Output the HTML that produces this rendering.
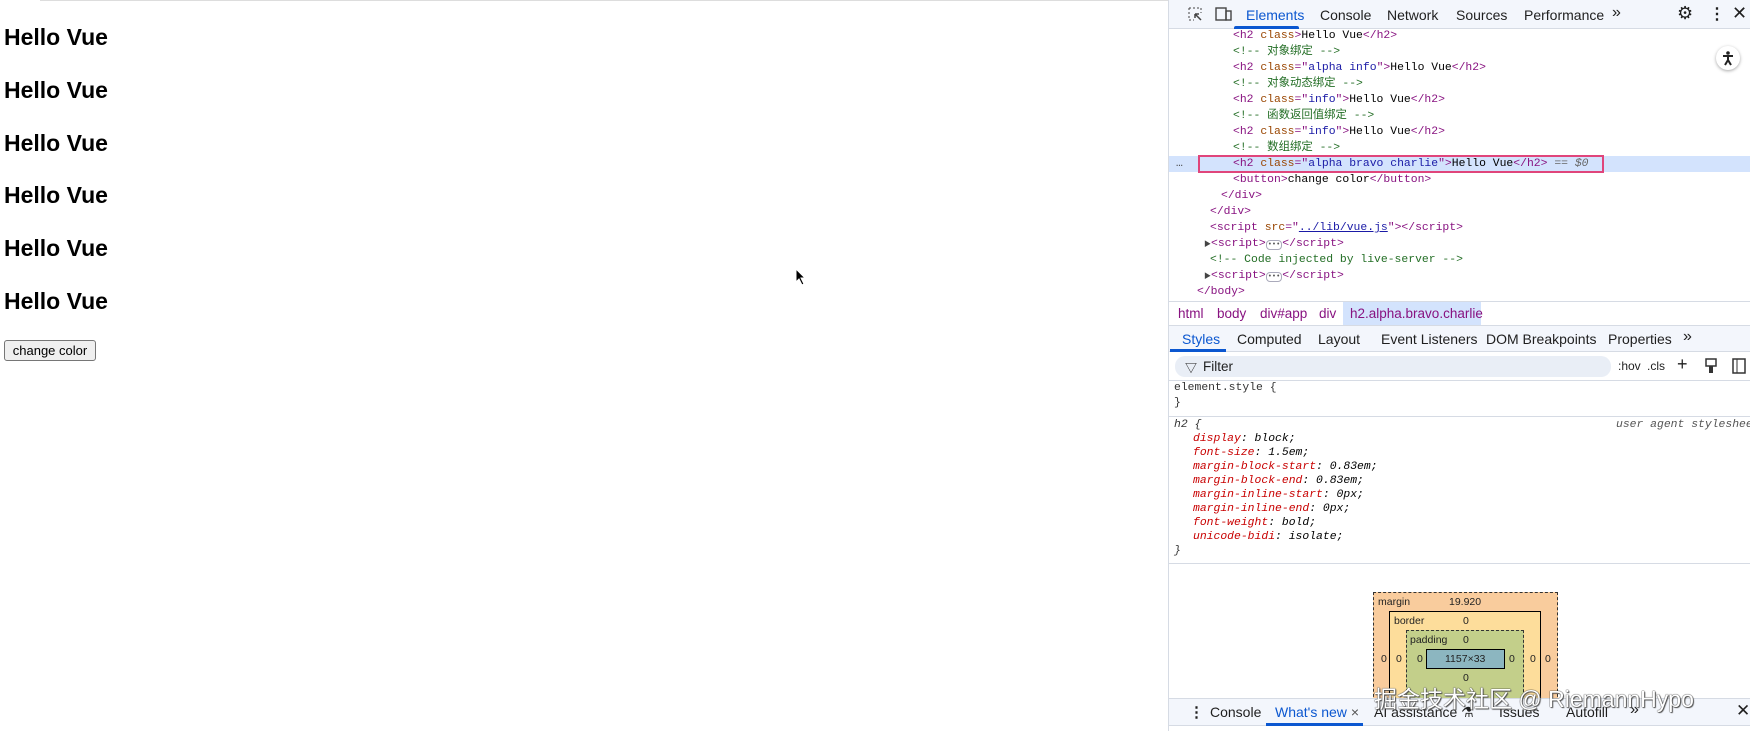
<!DOCTYPE html>
<html><head><meta charset="utf-8">
<style>
*{margin:0;padding:0;box-sizing:border-box}
body{width:1750px;height:731px;overflow:hidden;background:#fff;font-family:"Liberation Sans","Noto Sans CJK SC",sans-serif;position:relative}
.a{position:absolute;white-space:nowrap}
.h{position:absolute;left:4px;font-size:23px;font-weight:bold;color:#000}
.btn{position:absolute;left:4px;top:340px;width:92px;height:21px;border:1px solid #767676;border-radius:3px;background:#efefef;font-size:13px;text-align:center;line-height:19px}
#dt{position:absolute;left:1168px;top:0;width:582px;height:731px;border-left:1px solid #d6dbe4;background:#fff}
.mono{font-family:"Liberation Mono","Noto Sans CJK SC",monospace;font-size:11.4px}
.mono div{line-height:16px;height:16px}
.t{color:#881280}.n{color:#994500}.v{color:#1a1aa6}.c{color:#236e25}
.ui{font-size:13.5px;color:#1f1f1f}
.prop{color:#c80000}
</style></head><body>
<div class="a" style="left:40px;top:0;width:1128px;height:1px;background:#ddd"></div>
<div class="h" style="top:24px">Hello Vue</div>
<div class="h" style="top:77px">Hello Vue</div>
<div class="h" style="top:130px">Hello Vue</div>
<div class="h" style="top:182px">Hello Vue</div>
<div class="h" style="top:235px">Hello Vue</div>
<div class="h" style="top:288px">Hello Vue</div>
<div class="btn">change color</div>
<svg class="a" style="left:795px;top:268px" width="12" height="18" viewBox="0 0 12 18"><path d="M1 1 L1 14 L4 11 L7 17 L9 16 L6 10 L10 10 Z" fill="#000" stroke="#fff" stroke-width="1"/></svg>

<div id="dt">
<div class="a" style="left:0;top:0;width:582px;height:29px;background:#f3f6fc;border-bottom:1px solid #d6dbe4"></div>
<svg class="a" style="left:18px;top:6px" width="16" height="16"><path d="M2 2h12v5M2 2v12h5" stroke="#444" fill="none" stroke-dasharray="2 2"/><path d="M8 8l6 6M8 8h4M8 8v4" stroke="#444" fill="none" stroke-width="1.5"/></svg>
<svg class="a" style="left:46px;top:6px" width="18" height="16"><rect x="1" y="2" width="10" height="12" fill="none" stroke="#444" stroke-width="1.4"/><rect x="11" y="5" width="5" height="9" fill="none" stroke="#444" stroke-width="1.4"/></svg>
<div class="a ui" style="left:77px;top:7px;color:#0b57d0;font-size:14px">Elements</div>
<div class="a" style="left:65px;top:26px;width:65px;height:3px;background:#0b57d0;border-radius:2px 2px 0 0"></div>
<div class="a ui" style="left:151px;top:7px;font-size:14px">Console</div>
<div class="a ui" style="left:218px;top:7px;font-size:14px">Network</div>
<div class="a ui" style="left:287px;top:7px;font-size:14px">Sources</div>
<div class="a ui" style="left:355px;top:7px;font-size:14px">Performance</div>
<div class="a ui" style="left:443px;top:4px;font-size:16px">»</div>
<div class="a ui" style="left:508px;top:3px;font-size:18px">⚙</div>
<div class="a ui" style="left:540px;top:4px;font-size:16px;font-weight:bold">⋮</div>
<div class="a ui" style="left:563px;top:3px;font-size:18px">✕</div>
<div class="a" style="left:547px;top:46px;width:24px;height:24px;border-radius:12px;background:#fff;box-shadow:0 1px 3px rgba(0,0,0,.35)"></div>
<svg class="a" style="left:551px;top:50px" width="16" height="16"><circle cx="8" cy="3" r="1.8" fill="#222"/><path d="M3 6h10M8 6v4M8 10l-3 5M8 10l3 5" stroke="#222" stroke-width="2" fill="none"/></svg>

<div class="a" style="left:0;top:156px;width:582px;height:16px;background:#d3e3fd"></div>
<div class="a" style="left:29px;top:155px;width:406px;height:18px;border:2px solid #e0457b"></div>
<div class="a mono" style="left:7px;top:156px;color:#444;line-height:16px">…</div>
<div class="mono">
<div class="a" style="left:64px;top:28px"><span class="t">&lt;h2 </span><span class="n">class</span><span class="t">&gt;</span>Hello Vue<span class="t">&lt;/h2&gt;</span></div>
<div class="a c" style="left:64px;top:44px">&lt;!-- 对象绑定 --&gt;</div>
<div class="a" style="left:64px;top:60px"><span class="t">&lt;h2 </span><span class="n">class</span><span class="t">="</span><span class="v">alpha info</span><span class="t">"&gt;</span>Hello Vue<span class="t">&lt;/h2&gt;</span></div>
<div class="a c" style="left:64px;top:76px">&lt;!-- 对象动态绑定 --&gt;</div>
<div class="a" style="left:64px;top:92px"><span class="t">&lt;h2 </span><span class="n">class</span><span class="t">="</span><span class="v">info</span><span class="t">"&gt;</span>Hello Vue<span class="t">&lt;/h2&gt;</span></div>
<div class="a c" style="left:64px;top:108px">&lt;!-- 函数返回值绑定 --&gt;</div>
<div class="a" style="left:64px;top:124px"><span class="t">&lt;h2 </span><span class="n">class</span><span class="t">="</span><span class="v">info</span><span class="t">"&gt;</span>Hello Vue<span class="t">&lt;/h2&gt;</span></div>
<div class="a c" style="left:64px;top:140px">&lt;!-- 数组绑定 --&gt;</div>
<div class="a" style="left:64px;top:156px"><span class="t">&lt;h2 </span><span class="n">class</span><span class="t">="</span><span class="v">alpha bravo charlie</span><span class="t">"&gt;</span>Hello Vue<span class="t">&lt;/h2&gt;</span> <span style="color:#666">== <i>$0</i></span></div>
<div class="a" style="left:64px;top:172px"><span class="t">&lt;button&gt;</span>change color<span class="t">&lt;/button&gt;</span></div>
<div class="a t" style="left:52px;top:188px">&lt;/div&gt;</div>
<div class="a t" style="left:41px;top:204px">&lt;/div&gt;</div>
<div class="a" style="left:41px;top:220px"><span class="t">&lt;script </span><span class="n">src</span><span class="t">="</span><span style="color:#1a1aa6;text-decoration:underline">../lib/vue.js</span><span class="t">"&gt;&lt;/script&gt;</span></div>
<div class="a" style="left:35px;top:236px"><span style="color:#444;font-size:7px">▶</span><span class="t">&lt;script&gt;</span><span style="color:#555;border:1px solid #aab;border-radius:4px;font-size:7px;padding:0 1px">•••</span><span class="t">&lt;/script&gt;</span></div>
<div class="a c" style="left:41px;top:252px">&lt;!-- Code injected by live-server --&gt;</div>
<div class="a" style="left:35px;top:268px"><span style="color:#444;font-size:7px">▶</span><span class="t">&lt;script&gt;</span><span style="color:#555;border:1px solid #aab;border-radius:4px;font-size:7px;padding:0 1px">•••</span><span class="t">&lt;/script&gt;</span></div>
<div class="a t" style="left:28px;top:284px">&lt;/body&gt;</div>
</div>

<div class="a" style="left:0;top:301px;width:582px;height:1px;background:#d6dbe4"></div>
<div class="a" style="left:174px;top:302px;width:138px;height:23px;background:#d3e3fd"></div>
<div class="a ui" style="left:9px;top:306px;color:#881280">html</div>
<div class="a ui" style="left:48px;top:306px;color:#881280">body</div>
<div class="a ui" style="left:91px;top:306px;color:#881280">div#app</div>
<div class="a ui" style="left:150px;top:306px;color:#881280">div</div>
<div class="a ui" style="left:181px;top:306px;color:#881280">h2.alpha.bravo.charlie</div>
<div class="a" style="left:0;top:325px;width:582px;height:27px;background:#f3f6fc;border-top:1px solid #d6dbe4;border-bottom:1px solid #d6dbe4"></div>
<div class="a ui" style="left:13px;top:331px;color:#0b57d0;font-size:14px">Styles</div>
<div class="a" style="left:1px;top:349px;width:56px;height:3px;background:#0b57d0"></div>
<div class="a ui" style="left:68px;top:331px;font-size:14px">Computed</div>
<div class="a ui" style="left:149px;top:331px;font-size:14px">Layout</div>
<div class="a ui" style="left:212px;top:331px;font-size:14px">Event Listeners</div>
<div class="a ui" style="left:317px;top:331px;font-size:14px">DOM Breakpoints</div>
<div class="a ui" style="left:439px;top:331px;font-size:14px">Properties</div>
<div class="a ui" style="left:514px;top:328px;font-size:16px">»</div>
<div class="a" style="left:6px;top:356px;width:436px;height:21px;border-radius:10px;background:#e9eef6"></div>
<div class="a ui" style="left:16px;top:359px;font-size:12px">▽</div>
<div class="a ui" style="left:34px;top:359px">Filter</div>
<div class="a ui" style="left:449px;top:359px;font-size:12px">:hov</div>
<div class="a ui" style="left:478px;top:359px;font-size:12px">.cls</div>
<div class="a ui" style="left:508px;top:354px;font-size:18px">+</div>
<svg class="a" style="left:536px;top:358px" width="12" height="16"><rect x="1" y="1" width="10" height="7" fill="none" stroke="#333" stroke-width="1.5"/><rect x="4" y="8" width="4" height="7" fill="#333"/></svg>
<svg class="a" style="left:563px;top:358px" width="14" height="16"><rect x="1" y="1" width="12" height="14" fill="none" stroke="#333" stroke-width="1.5"/><line x1="5" y1="1" x2="5" y2="15" stroke="#333"/></svg>
<div class="a" style="left:0;top:380px;width:582px;height:1px;background:#d6dbe4"></div>
<div class="mono">
<div class="a" style="left:5px;top:380px;color:#333">element.style {</div>
<div class="a" style="left:5px;top:395px;color:#333">}</div>
</div>
<div class="a" style="left:0;top:416px;width:582px;height:1px;background:#d6dbe4"></div>
<div class="mono" style="font-style:italic">
<div class="a" style="left:5px;top:417px;color:#333">h2 {</div>
<div class="a" style="left:447px;top:417px;color:#555">user agent stylesheet</div>
<div class="a" style="left:24px;top:431px"><span class="prop">display</span>: block;</div>
<div class="a" style="left:24px;top:445px"><span class="prop">font-size</span>: 1.5em;</div>
<div class="a" style="left:24px;top:459px"><span class="prop">margin-block-start</span>: 0.83em;</div>
<div class="a" style="left:24px;top:473px"><span class="prop">margin-block-end</span>: 0.83em;</div>
<div class="a" style="left:24px;top:487px"><span class="prop">margin-inline-start</span>: 0px;</div>
<div class="a" style="left:24px;top:501px"><span class="prop">margin-inline-end</span>: 0px;</div>
<div class="a" style="left:24px;top:515px"><span class="prop">font-weight</span>: bold;</div>
<div class="a" style="left:24px;top:529px"><span class="prop">unicode-bidi</span>: isolate;</div>
<div class="a" style="left:5px;top:543px;color:#333">}</div>
</div>
<div class="a" style="left:0;top:563px;width:582px;height:1px;background:#d6dbe4"></div>

<div class="a" style="left:204px;top:592px;width:185px;height:110px;background:#f9cc9d;border:1px dashed #333"></div>
<div class="a" style="left:220px;top:611px;width:152px;height:91px;background:#fddd9b;border:1px solid #000"></div>
<div class="a" style="left:237px;top:630px;width:118px;height:72px;background:#c3cf8a;border:1px dashed #333"></div>
<div class="a" style="left:257px;top:649px;width:79px;height:20px;background:#8cb6c0;border:1px solid #000"></div>
<div style="font-size:10.5px;color:#222">
<div class="a" style="left:209px;top:596px">margin</div>
<div class="a" style="left:280px;top:596px">19.920</div>
<div class="a" style="left:225px;top:615px">border</div>
<div class="a" style="left:294px;top:615px">0</div>
<div class="a" style="left:241px;top:634px">padding</div>
<div class="a" style="left:294px;top:634px">0</div>
<div class="a" style="left:276px;top:653px">1157×33</div>
<div class="a" style="left:212px;top:653px">0</div><div class="a" style="left:227px;top:653px">0</div><div class="a" style="left:248px;top:653px">0</div>
<div class="a" style="left:340px;top:653px">0</div><div class="a" style="left:361px;top:653px">0</div><div class="a" style="left:376px;top:653px">0</div>
<div class="a" style="left:294px;top:672px">0</div>
</div>

<div class="a" style="left:0;top:698px;width:582px;height:28px;background:#f3f6fc;border-top:1px solid #d6dbe4;border-bottom:1px solid #d6dbe4"></div>
<div class="a ui" style="left:20px;top:703px;font-size:15px;font-weight:bold">⋮</div>
<div class="a ui" style="left:41px;top:704px;font-size:14px">Console</div>
<div class="a ui" style="left:106px;top:704px;color:#0b57d0;font-size:14px">What's new <span style="color:#555">×</span></div>
<div class="a" style="left:97px;top:723px;width:97px;height:3px;background:#0b57d0"></div>
<div class="a ui" style="left:205px;top:704px;font-size:14px">AI assistance ⚗</div>
<div class="a ui" style="left:330px;top:704px;font-size:14px">Issues</div>
<div class="a ui" style="left:397px;top:704px;font-size:14px">Autofill</div>
<div class="a ui" style="left:461px;top:701px;font-size:16px">»</div>
<div class="a ui" style="left:567px;top:701px;font-size:17px">✕</div>
<div class="a" style="left:205px;top:685px;font-size:23px;color:#fff;text-shadow:0 0 1px #333,0 0 1px #333,1px 1px 1px #555;font-family:'Liberation Sans','Noto Sans CJK SC',sans-serif;line-height:28px">掘金技术社区 @ RiemannHypo</div>
</div>
</body></html>
